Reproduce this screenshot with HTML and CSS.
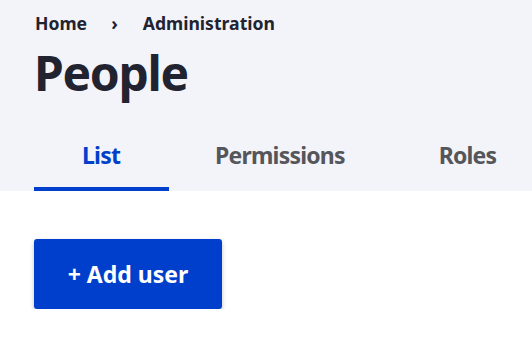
FILE: index.html
```html
<!DOCTYPE html>
<html>
<head>
<meta charset="utf-8">
<link rel="stylesheet" href="styles.css">
</head>
<body>
<header class="page-header">
  <nav class="breadcrumb">
    <a class="crumb" href="#">Home</a>
    <span class="sep">›</span>
    <a class="crumb" href="#">Administration</a>
  </nav>
  <h1 class="title">People</h1>
  <ul class="tabs">
    <li class="tab active">List</li>
    <li class="tab">Permissions</li>
    <li class="tab">Roles</li>
  </ul>
</header>
<main class="content">
  <a class="button" href="#">+ Add user</a>
</main>
</body>
</html>
```
FILE: styles.css
```css
html, body {
  margin: 0;
  padding: 0;
  background: #ffffff;
  font-family: "Noto Sans", "Open Sans", sans-serif;
  color: #222330;
  overflow: hidden;
}
.page-header {
  background: #f3f4f9;
  padding: 10px 0 0 34px;
  height: 181px;
  box-sizing: content-box;
  overflow: hidden;
}
.breadcrumb {
  display: flex;
  align-items: center;
  height: 26px;
  font-size: 17.6px;
  font-weight: 700;
}
.crumb {
  color: #222330;
  text-decoration: none;
  padding-left: 1px;
}
.sep {
  margin: 0 24px 0 24px;
  font-size: 18px;
}
.title {
  margin: 9px 0 0 0;
  font-size: 48px;
  line-height: 56px;
  font-weight: 700;
  letter-spacing: -1.3px;
}
.tabs {
  list-style: none;
  display: flex;
  margin: 34px 0 0 0;
  padding: 0;
}
.tab {
  flex: none;
  padding: 0 48px 0 46px;
  height: 56px;
  line-height: 40px;
  font-size: 23px;
  font-weight: 700;
  letter-spacing: -0.8px;
  color: #55565b;
  box-sizing: border-box;
}
.tab.active {
  padding: 0 49px 0 48px;
  color: #003ecc;
  border-bottom: 4px solid #003ecc;
}
.content {
  padding: 48px 0 0 34px;
}
.button {
  display: inline-flex;
  align-items: center;
  justify-content: center;
  width: 188px;
  height: 70px;
  background: #003ecc;
  color: #ffffff;
  border-radius: 3px;
  text-decoration: none;
  font-size: 23px;
  font-weight: 700;
  box-shadow: 0 2px 4px rgba(0, 0, 0, 0.25);
}
```
